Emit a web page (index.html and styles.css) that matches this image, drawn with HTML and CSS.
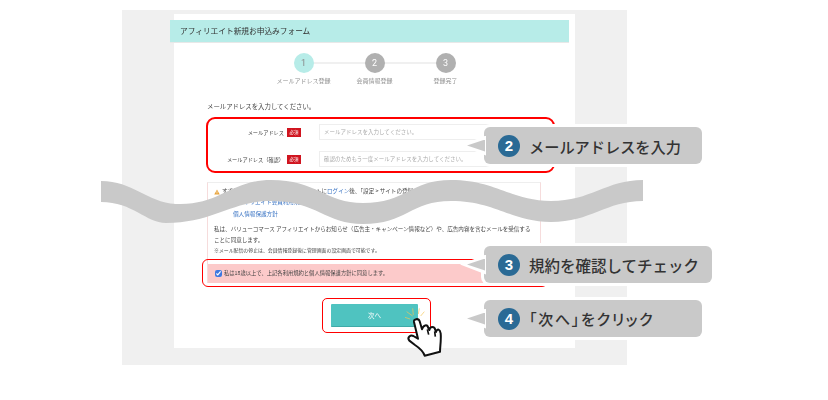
FILE: index.html
```html
<!DOCTYPE html>
<html lang="ja">
<head>
<meta charset="utf-8">
<title>アフィリエイト新規お申込みフォーム</title>
<link rel="stylesheet" href="styles.css">
</head>
<body>
<div class="stage">
  <div class="screen">
    <div class="card">
      <div class="heading">アフィリエイト新規お申込みフォーム</div>
      <ol class="steps">
        <li class="step is-active"><span class="dot">1</span><span class="step-label">メールアドレス登録</span></li>
        <li class="step"><span class="dot">2</span><span class="step-label">会員情報登録</span></li>
        <li class="step"><span class="dot">3</span><span class="step-label">登録完了</span></li>
      </ol>
      <div class="form">
        <p class="intro">メールアドレスを入力してください。</p>
        <div class="row">
          <span class="label">メールアドレス</span><span class="badge">必須</span>
          <div class="field">メールアドレスを入力してください。</div>
        </div>
        <div class="row">
          <span class="label">メールアドレス（確認）</span><span class="badge">必須</span>
          <div class="field">確認のためもう一度メールアドレスを入力してください。</div>
        </div>
        <div class="terms">
          <div class="notice">
            <svg class="warn" viewBox="0 0 12 12"><path d="M6 1 11.5 11H.5Z" fill="#e8a33a"/><path d="M6 4.5v3.5M6 9v1" stroke="#fff" stroke-width="1.2"/></svg>
            <span>すでにバリューコマースアフィリエイトに<span class="blue">ログイン</span>後、「設定 &gt; サイトの登録」から</span>
          </div>
          <div class="link-a">アフィリエイト会員利用規約</div>
          <div class="link-b">個人情報保護方針</div>
          <p class="body-text">私は、バリューコマース アフィリエイトからお知らせ（広告主・キャンペーン情報など）や、広告内容を含むメールを受信することに同意します。</p>
          <p class="note">※メール配信の停止は、会員情報登録後に管理画面の設定画面で可能です。</p>
          <label class="agree"><input class="check" type="checkbox" checked>私は18歳以上で、上記各利用規約と個人情報保護方針に同意します。</label>
        </div>
        <button class="next" type="button">次へ</button>
      </div>
    </div>
  </div>

  <div class="ring ring-a"></div>
  <div class="ring ring-b"></div>
  <div class="ring ring-c"></div>

  <svg class="wave" viewBox="0 0 542 44"><path d="M0 1C32 1 45 22 75 24 118 26 130 0 170 0 215 0 225 23 262 23 305 23 310 0 350 0 395 0 410 21 450 21 490 21 505 0 542 0V21C505 21 490 42 450 42 410 42 395 21 350 21 310 21 305 44 262 44 225 44 215 21 170 21 130 21 113 43 65 43 45 43 32 22 0 22Z" fill="#c9c9c9"/></svg>

  <svg class="hand" viewBox="0 0 210 210">
    <g stroke="#f4c655" stroke-width="2" fill="none"><path d="M45 82 60 87M50 65 68 78M68 55 70 75M88 55 85 72M103 65 92 78"/></g>
    <path d="M72 96C70 86 86 84 89 94L96 118C100 104 112 102 115 114L118 120C120 108 134 108 136 120L138 126C142 114 150 118 152 130 154 150 150 170 150 185L104 197C100 185 90 175 75 165L58 152C50 142 62 134 70 138L84 146Z" fill="#fff" stroke="#111" stroke-width="6" stroke-linejoin="round"/>
    <path d="M112 118 116 134M134 124 136 140" stroke="#111" stroke-width="5" fill="none"/>
  </svg>

  <div class="bubble bubble-2"><span class="num">2</span><span class="bubble-text">メールアドレスを入力</span></div>
  <div class="bubble bubble-3"><span class="num">3</span><span class="bubble-text">規約を確認してチェック</span></div>
  <div class="bubble bubble-4"><span class="num">4</span><span class="bubble-text">「次へ」をクリック</span></div>
</div>
</body>
</html>
```

FILE: styles.css
```css
* { box-sizing: border-box; }
html, body { margin: 0; padding: 0; background: #fff; }
body { font-family: "Noto Sans CJK JP", "Noto Sans", sans-serif; color: #444; }
p, ol { margin: 0; padding: 0; }

.stage { position: relative; width: 828px; height: 400px; padding: 10px 0 0 122px; overflow: hidden; }

.screen { display: flex; width: 505px; height: 355px; padding: 4px 52px 17px; background: #f0f0f0; }
.card { width: 401px; padding-top: 6px; background: #fff; filter: blur(.35px); }

.heading { height: 22px; margin: 0 6px 0 -4px; padding-left: 10px; background: #b7ece8; box-shadow: 0 1px 0 #e8e8e8; font-size: 7.7px; line-height: 22px; color: #333; }

.steps { display: grid; grid-template-columns: repeat(3, 71px); justify-content: center; margin-top: 11px; list-style: none; }
.step { position: relative; display: flex; flex-direction: column; align-items: center; }
.step + .step::before { content: ""; position: absolute; top: 9px; right: 50%; width: 71px; height: 2px; background: #f0f0f0; }
.dot { position: relative; z-index: 1; width: 20px; height: 20px; border-radius: 50%; background: #b0b0b0; color: #fff; font: 9px/20px Roboto, sans-serif; text-align: center; }
.is-active .dot { background: #b7ece8; color: #888; }
.step-label { margin-top: 3px; font-size: 6px; line-height: 10px; color: #909090; white-space: nowrap; }

.form { padding: 16px 34px 0 33px; }
.intro { font-size: 6.4px; line-height: 10px; color: #444; }

.row { display: flex; align-items: center; height: 16px; margin-top: 11px; }
.intro + .row { margin-top: 12px; }
.label { width: 77px; text-align: right; font-size: 5.2px; color: #444; white-space: nowrap; }
.badge { width: 14px; height: 9px; margin: 0 18px 0 3px; background: #d0141f; color: #fff; font-size: 4.5px; line-height: 9px; text-align: center; }
.field { width: 221px; height: 16px; padding-left: 4px; border: 1px solid #eee; font-size: 5.5px; line-height: 14px; color: #aaa; white-space: nowrap; }

.terms { margin-top: 15px; padding: 4px 0 0; border: 1px solid #f6dcdc; border-top-color: #eee; border-bottom: 0; font-size: 5.55px; color: #444; }
.notice { display: flex; align-items: center; gap: 2px; padding-left: 6px; line-height: 9px; white-space: nowrap; }
.warn { width: 6px; height: 6px; }
.blue, .link-a, .link-b { color: #3a74c4; }
.link-a { margin-top: 2px; padding-left: 25px; line-height: 9px; }
.link-b { margin-top: 2.5px; padding-left: 25px; line-height: 9px; font-size: 5.6px; }
.body-text { margin-top: 5px; padding: 0 8px 0 6px; line-height: 11px; }
.note { margin-top: 0; padding-left: 6px; font-size: 4.9px; line-height: 8px; }
.agree { display: flex; align-items: center; height: 19px; margin-top: 10px; padding-left: 7px; background: #fccaca; font-size: 5.3px; white-space: nowrap; }
.check { width: 7px; height: 7px; margin: 0 2px 0 0; accent-color: #3f78e0; }

.next { display: block; width: 87px; height: 23px; margin: 21px 0 0 124px; padding: 0; border: 0; border-bottom: 1px solid #3faaa8; border-radius: 1px; background: #4fc3c0; color: #fff; font: 6.5px "Noto Sans CJK JP", sans-serif; }

/* overlays on the screenshot */
.ring { position: absolute; border: 2px solid #f00; }
.ring-a { left: 206px; top: 117px; width: 349px; height: 56px; border-radius: 9px; }
.ring-b { left: 202px; top: 259px; width: 346px; height: 28px; border-width: 1.5px; border-radius: 6px; }
.ring-c { left: 322px; top: 298px; width: 109px; height: 35px; border-width: 1.5px; border-radius: 5px; }

.wave { position: absolute; left: 101px; top: 180px; width: 542px; height: 44px; }
.hand { position: absolute; left: 390px; top: 290px; width: 70px; height: 70px; }

.bubble { position: absolute; left: 484px; display: flex; align-items: center; width: 218px; height: 37px; padding-left: 14px; border-radius: 6px; background: #c9c9c9; box-shadow: 0 0 0 3px #fff; }
.bubble::before, .bubble::after { content: ""; position: absolute; top: 50%; }
.bubble::before { left: -24px; width: 26px; height: 20px; margin-top: -10px; background: #fff; clip-path: polygon(0 50%, 100% 0, 100% 100%); }
.bubble::after { left: -17px; width: 18px; height: 12px; margin-top: -6px; background: #c9c9c9; clip-path: polygon(0 50%, 100% 0, 100% 100%); }
.bubble-2 { top: 127px; }
.bubble-3 { top: 246px; width: 228px; }
.bubble-4 { top: 300px; }
.num { flex: none; width: 22px; height: 22px; margin-right: 9px; border-radius: 50%; background: #2a6a95; color: #fff; font: 700 15px/22px "Liberation Sans", sans-serif; text-align: center; }
.bubble-text { font-size: 15.2px; font-weight: 500; color: #333; white-space: nowrap; }
.bubble-3 .bubble-text { font-size: 15.5px; }
.bubble-4 .bubble-text { font-size: 15px; font-feature-settings: "palt"; letter-spacing: 1.7px; }
```
